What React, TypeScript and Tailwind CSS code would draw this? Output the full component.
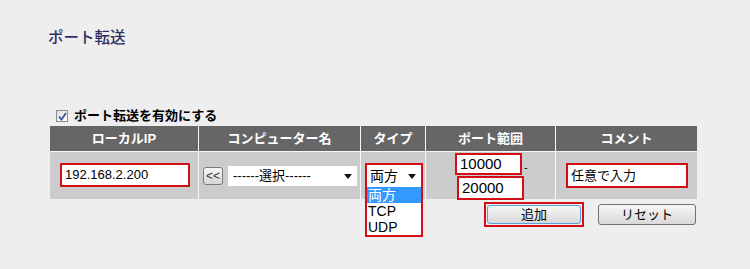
import React from "react";

const font = "font-['Liberation_Sans','Noto_Sans_CJK_JP',sans-serif]";

const RedInput = ({ value, className, text }: { value: string; className: string; text: string }) => (
  <div
    className={`border-2 border-[#d20f16] bg-white flex items-center pl-[3px] text-black ${text} ${className}`}
  >
    {value}
  </div>
);

const Arrow = () => (
  <svg width="8" height="5" viewBox="0 0 8 5">
    <polygon points="0,0 8,0 4,5" fill="#111" />
  </svg>
);

export default function App() {
  return (
    <div className={`h-[269px] w-[750px] bg-[#eeeeee] text-black ${font}`}>
      <h1 className="pl-[48px] pt-[29px] text-[15.5px] leading-[18px] font-medium text-[#2e2e62]">ポート転送</h1>

      {/* 有効チェック */}
      <div className="mt-[61px] ml-[56px] flex items-center h-[16px]">
        <span className="w-[12px] h-[12px] border border-[#8c8c8c] bg-gradient-to-br from-[#dcdcdc] to-white flex items-center justify-center">
          <svg width="9" height="9" viewBox="0 0 9 9">
            <path d="M1 4.5 L3.5 7.5 L8 1" stroke="#3f4f9c" strokeWidth="1.8" fill="none" />
          </svg>
        </span>
        <span className="ml-[6px] text-[13px] font-bold leading-[16px]">ポート転送を有効にする</span>
      </div>

      {/* テーブル */}
      <div className="mt-[2px] ml-[50px] w-[647px] grid grid-cols-[148px_161px_64px_129px_141px] grid-rows-[25px_47px] gap-px bg-[#f7f7f7]">
        {["ローカルIP", "コンピューター名", "タイプ", "ポート範囲", "コメント"].map((h) => (
          <div
            key={h}
            className="bg-[#666666] text-white font-bold text-[13px] flex items-center justify-center"
          >
            {h}
          </div>
        ))}

        <div className="bg-[#cccccc] pl-[10px] pt-[11px]">
          <RedInput value="192.168.2.200" className="w-[130px] h-[24px]" text="text-[13px]" />
        </div>

        <div className="bg-[#cccccc] flex items-start pl-[4px] pt-[14px]">
          <button className="mt-[1px] w-[20px] h-[18px] border border-[#7a7a7a] rounded-[3px] bg-gradient-to-b from-[#f7f7f7] to-[#d6d6d6] text-[12px] leading-none text-[#333] flex items-center justify-center">
            &lt;&lt;
          </button>
          <div className="ml-[5px] w-[129px] h-[20px] bg-white flex items-center justify-between pl-[5px] pr-[5px] text-[13px]">
            <span>------選択------</span>
            <Arrow />
          </div>
        </div>

        <div className="bg-[#cccccc] relative">
          <div className="absolute left-[4px] top-[11px] w-[58px] h-[74px] border-2 border-[#d20f16] bg-white z-10">
            <div className="h-[22px] flex items-center justify-between pl-[3px] pr-[5px] text-[14px]">
              <span>両方</span>
              <Arrow />
            </div>
            <div className="h-[16px] bg-[#3399ff] text-white text-[14px] leading-[16px] pl-px">両方</div>
            <div className="h-[16px] text-[14px] leading-[16px] pl-px">TCP</div>
            <div className="h-[16px] text-[14px] leading-[16px] pl-px">UDP</div>
          </div>
        </div>

        <div className="bg-[#cccccc] pt-px">
          <div className="flex items-start ml-[29px]">
            <RedInput value="10000" className="w-[67px] h-[22px]" text="text-[15px]" />
            <span className="ml-[2px] mt-[9px] text-[11px] leading-none">-</span>
          </div>
          <RedInput value="20000" className="ml-[31px] mt-px w-[67px] h-[24px]" text="text-[15px]" />
        </div>

        <div className="bg-[#cccccc] pl-[10px] pt-[11px]">
          <RedInput value="任意で入力" className="w-[122px] h-[25px]" text="text-[13px]" />
        </div>
      </div>

      {/* ボタン */}
      <div className="mt-[3px] ml-[484px] flex items-center">
        <div className="w-[100px] h-[25px] border-2 border-[#d20f16] p-px">
          <button className="w-full h-full border border-[#4fa3d8] rounded-[3px] bg-gradient-to-b from-[#f6f6f6] to-[#d9d9d9] text-[13px] leading-none flex items-center justify-center">
            追加
          </button>
        </div>
        <button className="ml-[14px] w-[98px] h-[21px] border border-[#707070] rounded-[3px] bg-gradient-to-b from-[#f6f6f6] to-[#d9d9d9] text-[13px] leading-none flex items-center justify-center">
          リセット
        </button>
      </div>
    </div>
  );
}
